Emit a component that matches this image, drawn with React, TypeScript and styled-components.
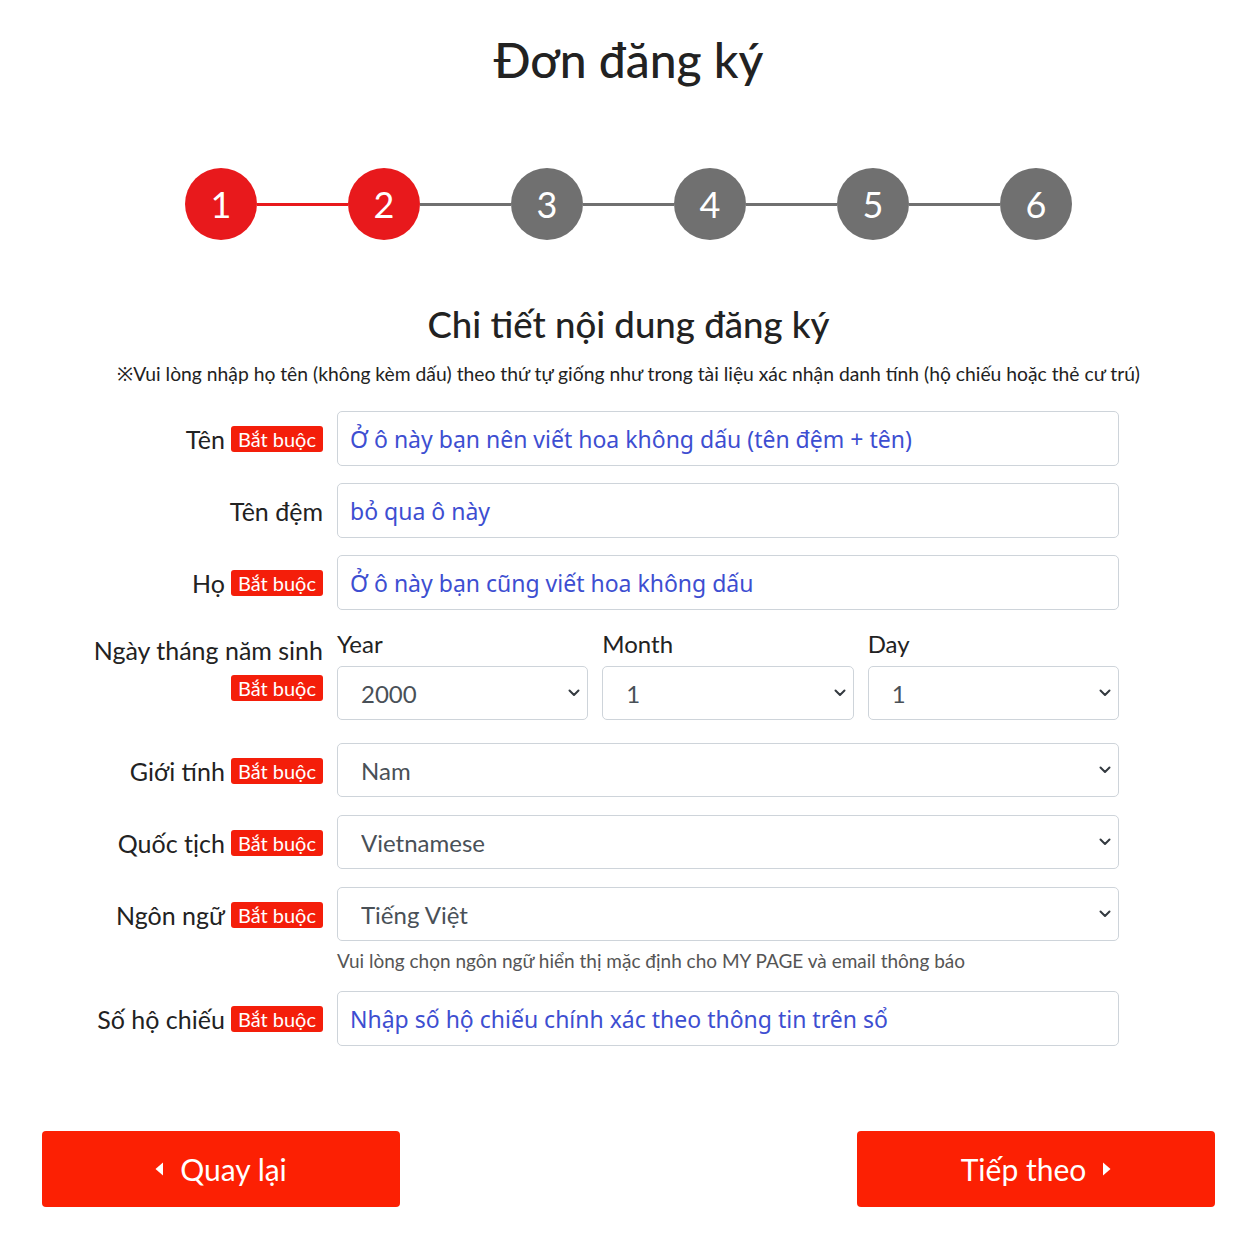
import styled, { createGlobalStyle } from "styled-components";

const GlobalStyle = createGlobalStyle`
    body {
        margin: 0;
        background: #fff;
        color: #212529;
        font-family: Lato, "Noto Sans", sans-serif;
    }
    * {
        box-sizing: border-box;
    }
`;

const steps = [1, 2, 3, 4, 5, 6];
const current = 2;

type Field = {
    label: string;
    required?: boolean;
    placeholder: string;
};

const nameFields: Field[] = [
    { label: "Tên", required: true, placeholder: "Ở ô này bạn nên viết hoa không dấu (tên đệm + tên)" },
    { label: "Tên đệm", placeholder: "bỏ qua ô này" },
    { label: "Họ", required: true, placeholder: "Ở ô này bạn cũng viết hoa không dấu" },
];

const dateParts = [
    { name: "Year", value: "2000" },
    { name: "Month", value: "1" },
    { name: "Day", value: "1" },
];

const selectFields = [
    { label: "Giới tính", value: "Nam" },
    { label: "Quốc tịch", value: "Vietnamese" },
    { label: "Ngôn ngữ", value: "Tiếng Việt" },
];

function Chevron() {
    return (
        <Arrow width="12" height="8" viewBox="0 0 12 8" fill="none">
            <path d="M1.5 1.5L6 6L10.5 1.5" stroke="#343a40" strokeWidth="2" strokeLinecap="round" strokeLinejoin="round" />
        </Arrow>
    );
}

function Select({ value }: { value: string }) {
    return (
        <SelectWrap>
            <SelectBox defaultValue={value}>
                <option value={value}>{value}</option>
            </SelectBox>
            <Chevron />
        </SelectWrap>
    );
}

export default function App() {
    return (
        <Page>
            <GlobalStyle />
            <Title>Đơn đăng ký</Title>

            <Stepper>
                {steps.map((s, i) => (
                    <StepItem key={s}>
                        {i > 0 && <Line $active={s <= current} />}
                        <Circle $active={s <= current}>{s}</Circle>
                    </StepItem>
                ))}
            </Stepper>

            <SubTitle>Chi tiết nội dung đăng ký</SubTitle>
            <Note>
                ※Vui lòng nhập họ tên (không kèm dấu) theo thứ tự giống như trong tài liệu xác nhận danh tính (hộ chiếu hoặc thẻ cư trú)
            </Note>

            <Form>
                {nameFields.map((f) => (
                    <Row key={f.label}>
                        <Label>
                            {f.label}
                            {f.required && <Badge>Bắt buộc</Badge>}
                        </Label>
                        <Input placeholder={f.placeholder} />
                    </Row>
                ))}

                <Row $gap={23}>
                    <Label $stacked>
                        <span>Ngày tháng năm sinh</span>
                        <Badge>Bắt buộc</Badge>
                    </Label>
                    <DateGrid>
                        {dateParts.map((d) => (
                            <DateCol key={d.name}>
                                <DateName>{d.name}</DateName>
                                <Select value={d.value} />
                            </DateCol>
                        ))}
                    </DateGrid>
                </Row>

                {selectFields.map((f, i) => (
                    <Row key={f.label} $gap={i === 2 ? 19 : 17}>
                        <Label>
                            {f.label}
                            <Badge>Bắt buộc</Badge>
                        </Label>
                        <div>
                            <Select value={f.value} />
                            {i === 2 && (
                                <Help>Vui lòng chọn ngôn ngữ hiển thị mặc định cho MY PAGE và email thông báo</Help>
                            )}
                        </div>
                    </Row>
                ))}

                <Row>
                    <Label>
                        Số hộ chiếu
                        <Badge>Bắt buộc</Badge>
                    </Label>
                    <Input placeholder="Nhập số hộ chiếu chính xác theo thông tin trên sổ" />
                </Row>
            </Form>

            <Actions>
                <Button>
                    <svg width="9" height="14" viewBox="0 0 9 14">
                        <path d="M8 0.5L0.5 7L8 13.5Z" fill="#fff" />
                    </svg>
                    Quay lại
                </Button>
                <Button>
                    Tiếp theo
                    <svg width="9" height="14" viewBox="0 0 9 14">
                        <path d="M1 0.5L8.5 7L1 13.5Z" fill="#fff" />
                    </svg>
                </Button>
            </Actions>
        </Page>
    );
}

const Page = styled.div`
    width: 1257px;
    padding: 28px 42px 38px;
    display: flex;
    flex-direction: column;
    align-items: center;
`;

const Title = styled.h1`
    margin: 0;
    font-size: 48px;
    font-weight: 500;
    line-height: 64px;
    color: #222;
`;

const Stepper = styled.div`
    margin-top: 76px;
    display: flex;
    align-items: center;
`;

const StepItem = styled.div`
    display: flex;
    align-items: center;
`;

const Line = styled.div<{ $active: boolean }>`
    width: 91px;
    height: 3px;
    background: ${(p) => (p.$active ? "#e8191c" : "#707070")};
`;

const Circle = styled.div<{ $active: boolean }>`
    width: 72px;
    height: 72px;
    border-radius: 50%;
    background: ${(p) => (p.$active ? "#e8191c" : "#707070")};
    color: #fff;
    font-size: 36px;
    display: flex;
    align-items: center;
    justify-content: center;
`;

const SubTitle = styled.h2`
    margin: 59px 0 0;
    font-size: 36.6px;
    font-weight: 500;
    line-height: 50px;
    color: #222;
`;

const Note = styled.p`
    margin: 12px 0 0;
    font-size: 19.3px;
    line-height: 26px;
    color: #222;
`;

const Form = styled.div`
    align-self: flex-start;
    margin-top: 24px;
    display: flex;
    flex-direction: column;
`;

const Row = styled.div<{ $gap?: number }>`
    display: grid;
    grid-template-columns: 281px 782px;
    column-gap: 14px;
    align-items: start;
    margin-bottom: ${(p) => p.$gap ?? 17}px;
`;

const Label = styled.div<{ $stacked?: boolean }>`
    display: flex;
    flex-direction: ${(p) => (p.$stacked ? "column" : "row")};
    align-items: ${(p) => (p.$stacked ? "flex-end" : "center")};
    justify-content: ${(p) => (p.$stacked ? "flex-start" : "flex-end")};
    gap: ${(p) => (p.$stacked ? "10px" : "6px")};
    min-height: ${(p) => (p.$stacked ? "0" : "55px")};
    padding-top: ${(p) => (p.$stacked ? "8px" : "0")};
    font-size: 25px;
    color: #222;
`;

const Badge = styled.span`
    background: #f41e0a;
    color: #fff;
    font-size: 20px;
    line-height: 26px;
    padding: 0 7px;
    border-radius: 3px;
    white-space: nowrap;
`;

const Input = styled.input`
    width: 100%;
    height: 55px;
    border: 1px solid #ced4da;
    border-radius: 5px;
    padding: 0 12px;
    font-family: "Noto Sans", sans-serif;
    font-size: 23px;
    color: #3d4ed1;
    outline: none;
    &::placeholder {
        color: #3d4ed1;
    }
`;

const SelectWrap = styled.div`
    position: relative;
`;

const SelectBox = styled.select`
    width: 100%;
    height: 54px;
    appearance: none;
    border: 1px solid #ced4da;
    border-radius: 5px;
    background: #fff;
    padding: 0 40px 0 23px;
    font-family: Lato, sans-serif;
    font-size: 24px;
    color: #495057;
    outline: none;
`;

const Arrow = styled.svg`
    position: absolute;
    right: 8px;
    top: 50%;
    transform: translateY(-50%);
    pointer-events: none;
`;

const DateGrid = styled.div`
    display: grid;
    grid-template-columns: repeat(3, 1fr);
    column-gap: 14px;
`;

const DateCol = styled.div`
    display: flex;
    flex-direction: column;
    gap: 6px;
`;

const DateName = styled.div`
    font-size: 24px;
    line-height: 33px;
    color: #222;
`;

const Help = styled.div`
    margin-top: 8px;
    font-size: 19px;
    color: #555;
`;

const Actions = styled.div`
    margin-top: 68px;
    width: 100%;
    display: flex;
    justify-content: space-between;
`;

const Button = styled.button`
    width: 358px;
    height: 76px;
    border: none;
    border-radius: 4px;
    background: #fc2003;
    color: #fff;
    font-family: Lato, sans-serif;
    font-size: 30px;
    display: flex;
    align-items: center;
    justify-content: center;
    gap: 16px;
    cursor: pointer;
`;
